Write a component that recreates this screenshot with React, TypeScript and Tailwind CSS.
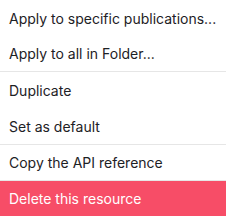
import React from 'react';

const Item: React.FC<{ label: string; danger?: boolean; h?: string }> = ({ label, danger, h = 'h-9' }) => (
  <button
    className={`flex w-full items-center px-[9px] text-left text-[14px] ${h} ${
      danger ? 'bg-[#f74d67] text-white' : 'bg-white text-[#1d2125]'
    }`}
  >
    {label}
  </button>
);

export default function App() {
  return (
    <div className="w-[226px] h-[216px] overflow-hidden bg-white" style={{ fontFamily: 'Inter, "Noto Sans", sans-serif' }}>
      <div className="flex flex-col border-b border-[#e6e6e6]">
        <Item label="Apply to specific publications..." />
        <Item label="Apply to all in Folder..." h="h-[35px]" />
      </div>
      <div className="flex flex-col border-b border-[#e6e6e6]">
        <Item label="Duplicate" />
        <Item label="Set as default" />
      </div>
      <div className="flex flex-col border-b border-[#e6e6e6]">
        <Item label="Copy the API reference" h="h-[35px]" />
      </div>
      <Item label="Delete this resource" h="h-[35px]" danger />
    </div>
  );
}
